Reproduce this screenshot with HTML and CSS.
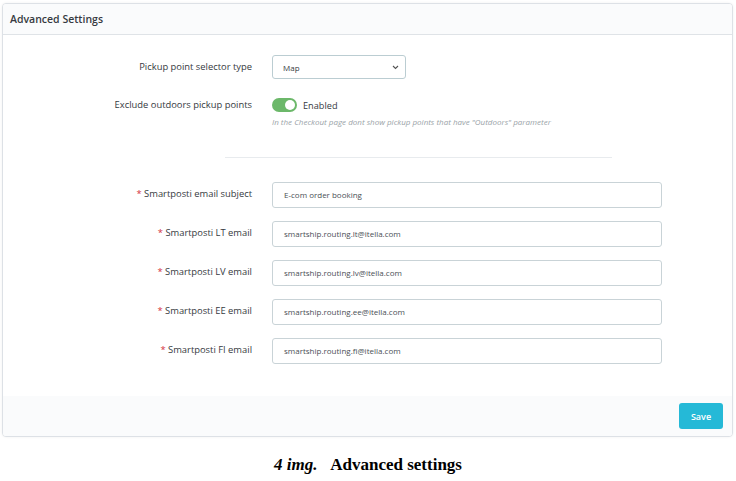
FILE: index.html
```html
<!DOCTYPE html>
<html>
<head>
<meta charset="utf-8">
<link rel="stylesheet" href="styles.css">
</head>
<body>
<div class="page">
  <div class="card">
    <div class="card-header">Advanced Settings</div>
    <div class="card-body">
      <div class="row row-select">
        <label class="label">Pickup point selector type</label>
        <div class="control">
          <div class="select">
            <span>Map</span>
            <svg class="chev" width="7" height="5" viewBox="0 0 7 5"><path d="M1 1 L3.5 3.5 L6 1" fill="none" stroke="#555" stroke-width="1.1"/></svg>
          </div>
        </div>
      </div>
      <div class="row row-toggle">
        <label class="label">Exclude outdoors pickup points</label>
        <div class="control">
          <div class="toggle-line">
            <span class="switch"><span class="knob"></span></span>
            <span class="toggle-text">Enabled</span>
          </div>
          <p class="help">In the Checkout page dont show pickup points that have "Outdoors" parameter</p>
        </div>
      </div>
      <div class="sep"></div>
      <div class="row row-input">
        <label class="label"><span class="req">*</span> Smartposti email subject</label>
        <div class="control"><div class="input">E-com order booking</div></div>
      </div>
      <div class="row row-input">
        <label class="label"><span class="req">*</span> Smartposti LT email</label>
        <div class="control"><div class="input">smartship.routing.lt@itella.com</div></div>
      </div>
      <div class="row row-input">
        <label class="label"><span class="req">*</span> Smartposti LV email</label>
        <div class="control"><div class="input">smartship.routing.lv@itella.com</div></div>
      </div>
      <div class="row row-input">
        <label class="label"><span class="req">*</span> Smartposti EE email</label>
        <div class="control"><div class="input">smartship.routing.ee@itella.com</div></div>
      </div>
      <div class="row row-input">
        <label class="label"><span class="req">*</span> Smartposti FI email</label>
        <div class="control"><div class="input">smartship.routing.fi@itella.com</div></div>
      </div>
    </div>
    <div class="card-footer">
      <button class="btn-save">Save</button>
    </div>
  </div>
  <p class="caption"><em>4 img.</em>&nbsp;&nbsp;&nbsp;Advanced settings</p>
</div>
</body>
</html>
```

FILE: styles.css
```css
* { box-sizing: border-box; }
html, body { margin: 0; padding: 0; background: #fff; }
body { font-family: "Open Sans", "Noto Sans", sans-serif; color: #363a41; }
.page { padding: 3px 3px 0 2px; }
.card {
  width: 731px;
  border: 1px solid #dde1e6;
  border-radius: 4px;
  box-shadow: 0 0 3px rgba(0,0,0,0.06);
  background: #fff;
  overflow: hidden;
}
.card-header {
  height: 31px;
  background: #fafbfc;
  border-bottom: 1px solid #dfe3e7;
  padding-left: 7px;
  font-size: 10.5px;
  font-weight: 600;
  line-height: 30px;
  color: #363a41;
}
.card-body { padding: 20px 0 32px 0; }
.row {
  display: grid;
  grid-template-columns: 249px 1fr;
  column-gap: 20px;
}
.label {
  text-align: right;
  font-size: 9.4px;
  color: #363a41;
}
.row-select .label { line-height: 24px; }
.select {
  width: 134px;
  height: 24px;
  border: 1px solid #bbcdd2;
  border-radius: 3px;
  display: flex;
  align-items: center;
  justify-content: space-between;
  padding: 0 6px 0 10px;
  font-size: 8px;
  color: #363a41;
}
.row-toggle { margin-top: 19px; }
.row-toggle .label { line-height: 14px; }
.toggle-line { display: flex; align-items: center; gap: 6px; height: 14px; }
.switch {
  width: 25px;
  height: 14px;
  border-radius: 7px;
  background: #6cb86a;
  position: relative;
  display: inline-block;
}
.knob {
  position: absolute;
  right: 2px;
  top: 2px;
  width: 10px;
  height: 10px;
  border-radius: 50%;
  background: #fff;
}
.toggle-text { font-size: 9.2px; color: #363a41; }
.help {
  margin: 4px 0 0 0;
  font-size: 8px;
  font-style: italic;
  color: #9aa3a8;
}
.sep {
  margin: 30px 0 24px 222px;
  width: 387px;
  height: 1px;
  background: #e8ebee;
}
.row-input { margin-bottom: 13px; }
.row-input:last-child { margin-bottom: 0; }
.row-input .label { line-height: 23px; }
.input {
  width: 390px;
  height: 26px;
  border: 1px solid #c9d3d7;
  border-radius: 3px;
  padding: 0 11px;
  font-size: 8px;
  line-height: 24px;
  color: #4a4f55;
}
.req { color: #d3303a; }
.card-footer {
  height: 40px;
  background: #fafbfc;
  display: flex;
  align-items: center;
  justify-content: flex-end;
  padding-right: 9px;
}
.btn-save {
  width: 44px;
  height: 26px;
  border: none;
  border-radius: 3px;
  background: #25b9d7;
  color: #fff;
  font-family: "Open Sans", "Noto Sans", sans-serif;
  font-weight: 600;
  font-size: 9px;
  padding: 0;
}
.caption {
  margin: 18px 0 0 0;
  text-align: center;
  font-family: "Liberation Serif", "Times New Roman", serif;
  font-weight: bold;
  font-size: 17px;
  line-height: 20px;
  color: #000;
  padding-left: 1px;
}
.caption em { font-style: italic; }
```
